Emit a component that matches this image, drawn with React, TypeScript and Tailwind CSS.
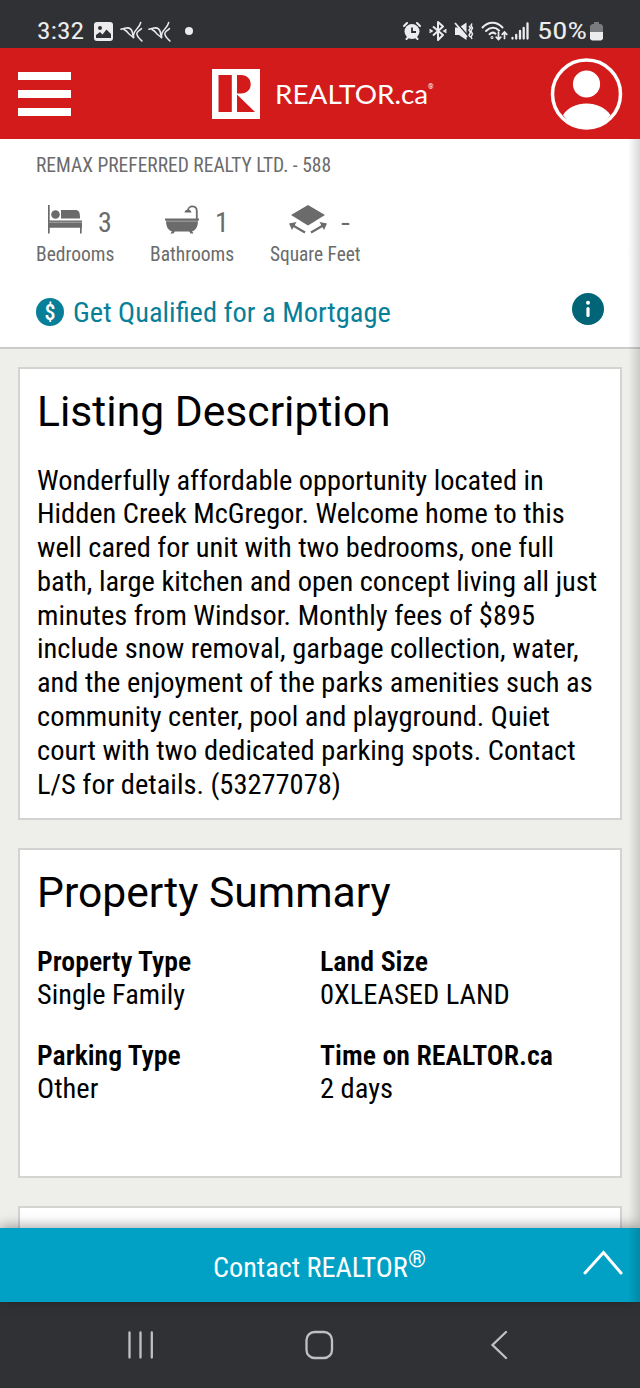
import { useLayoutEffect, useRef, useState } from 'react'
import type { ReactNode } from 'react'

interface FitProps {
  width: number
  className?: string
  children: ReactNode
}

// Single line of text, condensed horizontally to the given width
function Fit({ width, className = '', children }: FitProps) {
  const ref = useRef<HTMLSpanElement>(null)
  const [scale, setScale] = useState(1)

  useLayoutEffect(() => {
    if (ref.current) setScale(width / ref.current.offsetWidth)
  }, [width])

  return (
    <span className={`block ${className}`} style={{ width }}>
      <span
        ref={ref}
        className="inline-block origin-left whitespace-nowrap align-top"
        style={{ transform: `scaleX(${scale})` }}
      >
        {children}
      </span>
    </span>
  )
}

const description = [
  { text: 'Wonderfully affordable opportunity located in', width: 507 },
  { text: 'Hidden Creek McGregor. Welcome home to this', width: 528 },
  { text: 'well cared for unit with two bedrooms, one full', width: 517 },
  { text: 'bath, large kitchen and open concept living all just', width: 560 },
  { text: 'minutes from Windsor. Monthly fees of $895', width: 498 },
  { text: 'include snow removal, garbage collection, water,', width: 542 },
  { text: 'and the enjoyment of the parks amenities such as', width: 556 },
  { text: 'community center, pool and playground. Quiet', width: 513 },
  { text: 'court with two dedicated parking spots. Contact', width: 539 },
  { text: 'L/S for details. (53277078)', width: 303.5 },
]

const summary = [
  { label: 'Property Type', labelWidth: 154, value: 'Single Family', valueWidth: 148 },
  { label: 'Land Size', labelWidth: 108, value: '0XLEASED LAND', valueWidth: 190 },
  { label: 'Parking Type', labelWidth: 144, value: 'Other', valueWidth: 61 },
  { label: 'Time on REALTOR.ca', labelWidth: 233, value: '2 days', valueWidth: 73 },
]

function Bird() {
  return (
    <svg width="24" height="22" viewBox="0 0 24 22" fill="none" stroke="#ececee" strokeLinecap="round" strokeLinejoin="round">
      <path d="M1 8.300 6 7c3.500-.5 5.500 1 6.300 4l1.200 5.500" strokeWidth="1.600" />
      <path d="M4 8.500c2.500 1 3.500 2.500 5 4.500l4.500 3.500" strokeWidth="1.500" />
      <path d="M13.500 16.500C12.500 8.500 19 9 20.700 1.500" strokeWidth="1.500" />
      <path d="M21.500 7.500c-2 2.500-4.500 2.500-4.700 5 0 3 2.500 5 5.200 7.500" strokeWidth="1.500" />
    </svg>
  )
}

function StatusBar() {
  return (
    <div className="flex h-12 items-start bg-[#303135] pt-[19px] pl-[37px] text-[#ececee]">
      <Fit width={47} className="text-[24px] leading-6 font-normal font-stretch-normal">3:32</Fit>
      <svg className="mt-[3px] ml-[10px]" width="19" height="19" viewBox="0 0 19 19">
        <rect width="19" height="19" rx="3" fill="#ececee" />
        <circle cx="6" cy="6" r="2" fill="#303135" />
        <path d="M2 16v-3l4-3 2.500 2.500L12.500 7.500 17 12v4z" fill="#303135" />
      </svg>
      <div className="mt-[2px] ml-[7px] flex gap-1">
        <Bird />
        <Bird />
      </div>
      <div className="mt-2 ml-[13px] size-2 rounded-full bg-[#ececee]" />

      <svg className="mt-[3px] ml-[210px]" width="18" height="18" viewBox="0 0 18 18">
        <circle cx="9" cy="9.500" r="7.500" fill="#ececee" />
        <path d="m1 4 3-3M17 4l-3-3M3.500 17l2-2M14.500 17l-2-2" stroke="#ececee" strokeWidth="2" strokeLinecap="round" />
        <path d="M9 5.500V10h4" fill="none" stroke="#303135" strokeWidth="1.800" />
      </svg>
      <svg className="mt-[2px] ml-2" width="18" height="20" viewBox="0 0 18 20" fill="none" stroke="#ececee" strokeWidth="2">
        <path d="m4 5.500 10 8.500-5 5V1l5 4.500L4 14.500" strokeLinejoin="round" />
        <path d="M.5 8.500 3 10 .5 11.500M17.500 8.500 15 10l2.500 1.500" strokeWidth="1.500" />
      </svg>
      <svg className="mt-[3px] ml-[7px]" width="20" height="19" viewBox="0 0 20 19" fill="none">
        <path d="M1 5.500h4L12.500.5v17.500L5 13H1z" fill="#ececee" />
        <path d="m2 0 13 15" stroke="#303135" strokeWidth="1.500" />
        <path d="m1 1 12 14" stroke="#ececee" strokeWidth="1.800" />
        <path d="m15 4 1.500 2-1.500 2 1.500 2.500L15 13l1 2M18 1.500l-1 2 1.500 2.500-1.500 3 1.500 3-1.500 3 1 2" stroke="#ececee" strokeWidth="1.500" />
      </svg>
      <svg className="mt-[1px] ml-[7px]" width="28" height="21" viewBox="0 0 28 21" fill="none" stroke="#ececee" strokeWidth="2" strokeLinecap="round">
        <path d="M1.500 7.500C7 1 16 1 21.500 7.500M5 11c4-4.200 9.500-4.200 13-.5M8.500 14.200c2-1.800 4.300-2 6-.5" />
        <circle cx="11" cy="17.500" r=".5" />
        <path d="M17.500 12v7.500m-2.300-2.300 2.300 2.300 2.300-2.300M23.500 18.500V12m-2.300 2.300L23.500 12l2.300 2.300" strokeWidth="1.700" />
      </svg>
      <svg className="mt-[3px] ml-[2px]" width="18" height="18" viewBox="0 0 18 18" stroke="#ececee" strokeWidth="2.300" strokeLinecap="round">
        <path d="M1.500 16v.5M5.200 13v3.500M9 9v7.500M12.700 6v10.500M16.500 1.500v15" />
      </svg>
      <Fit width={50} className="ml-2 text-[24px] leading-6 font-normal font-stretch-normal">50%</Fit>
      <svg className="mt-[3px] ml-[3px]" width="13" height="19" viewBox="0 0 13 19">
        <path d="M4 0h5v2h2l2 2v6H0V4l2-2h2z" fill="#7a7b7e" />
        <path d="M0 10h13v7l-2 1.500H2L0 17z" fill="#ececee" />
      </svg>
    </div>
  )
}

function Header() {
  return (
    <header className="flex h-[91px] items-start bg-[#d31b1b] text-white">
      <div className="mt-6 ml-[18px] flex w-[53px] flex-col gap-[10px]">
        <div className="h-2 bg-white" />
        <div className="h-2 bg-white" />
        <div className="h-2 bg-white" />
      </div>
      <svg className="mt-[21px] ml-[141px]" width="48" height="50" viewBox="0 0 48 50">
        <path d="M0 0h48v50H0z" fill="#fff" />
        <path d="M6.500 6h13.300v37H6.500zM25 6h4c6 0 9.700 4 9.700 9.300S35 24.500 29 24.500h-4z" fill="#d31b1b" />
        <path d="m25 25.500 18 17.500H25z" fill="#d31b1b" />
      </svg>
      <Fit width={153} className="mt-[30px] ml-[15px] font-[Lato] text-[27.500px] leading-8">
        REALTOR.ca
      </Fit>
      <span className="mt-[35px] text-[7px] leading-[8px]">®</span>
      <svg className="mt-[9px] ml-auto mr-[17px]" width="73" height="73" viewBox="0 0 73 73">
        <circle cx="36.500" cy="37" r="34" fill="none" stroke="#fff" strokeWidth="3.500" />
        <circle cx="36.500" cy="27" r="13.600" fill="#fff" />
        <path d="M13 58c5-7.500 13.500-11.500 23.500-11.500S55 50.500 60.500 58c-6 8-14 13-24 13s-18-5-23.500-13z" fill="#fff" />
      </svg>
    </header>
  )
}

function BedIcon() {
  return (
    <svg width="34" height="29" viewBox="0 0 34 29" fill="#6b6b6b">
      <path d="M0 0h1.700v28.500H0zM0 15.500h34v7.300H0zM32 22h1.700v6.500H32z" />
      <path d="M1 17.300h33" stroke="#fff" strokeWidth=".4" />
      <circle cx="7.500" cy="9.500" r="4.300" />
      <path d="M13 5h14c4 0 5 2 5 8.500H13z" />
    </svg>
  )
}

function BathIcon() {
  return (
    <svg width="34" height="29" viewBox="0 0 34 29" fill="#6b6b6b">
      <path d="M0 13.500h34v2h-1c0 6-2 11-8 11H9c-6 0-8-5-8-11H0z" />
      <path d="M1 16.200h32" stroke="#fff" strokeWidth=".4" />
      <path d="M31.800 14V6c0-6-8.500-6-8.800-.5" fill="none" stroke="#6b6b6b" strokeWidth="1.800" />
      <path d="M19.500 7.500c.5-4 6.500-4 7 0zM7 26l-1.500 2.500h3L10 26zM27 26l1.500 2.500h-3L24 26z" />
    </svg>
  )
}

function AreaIcon() {
  return (
    <svg width="38" height="29" viewBox="0 0 38 29" fill="#6b6b6b">
      <path d="m19 0 17 10-17 10.500L2 10z" />
      <path d="m16 27.500-12-7M22 27.500l12-7" stroke="#6b6b6b" strokeWidth="2.200" />
      <path d="M0 18.500 7.500 17l-4.500 8zM38 18.500 30.500 17l4.500 8z" />
    </svg>
  )
}

const stats = [
  { icon: <BedIcon />, value: '3', valueWidth: 14, label: 'Bedrooms', labelWidth: 78, pad: 'pl-[12px] gap-[16px]', cell: 'w-[114px]' },
  { icon: <BathIcon />, value: '1', valueWidth: 14, label: 'Bathrooms', labelWidth: 84, pad: 'pl-[15px] gap-[16px]', cell: 'w-[120px]' },
  { icon: <AreaIcon />, value: '-', valueWidth: 9, label: 'Square Feet', labelWidth: 91, pad: 'pl-[19px] gap-[14px]', cell: 'w-[100px]' },
]

function ListingInfo() {
  return (
    <section className="h-[210px] border-b-2 border-[#cbcccb] bg-white px-9 pt-[14px] text-[#6b6b6b]">
      <Fit width={295} className="text-[19.500px] leading-[25px]">REMAX PREFERRED REALTY LTD. - 588</Fit>
      <div className="mt-[27px] flex">
        {stats.map((s) => (
          <div key={s.label} className={s.cell}>
            <div className={`flex h-[37px] items-start ${s.pad}`}>
              {s.icon}
              <Fit width={s.valueWidth} className="text-[28px] leading-[36px]">{s.value}</Fit>
            </div>
            <Fit width={s.labelWidth} className="text-[20px] leading-[25px]">{s.label}</Fit>
          </div>
        ))}
      </div>
      <div className="mt-[25px] flex items-start">
        <span className="mt-[6px] flex size-7 items-center justify-center rounded-full bg-[#077f98] text-[22px] font-medium text-white">
          $
        </span>
        <Fit width={317.5} className="ml-[9px] text-[28.500px] leading-[41px] text-[#077f98]">
          Get Qualified for a Mortgage
        </Fit>
        <svg className="mt-px ml-auto" width="32" height="32" viewBox="0 0 32 32">
          <circle cx="16" cy="16" r="16" fill="#016577" />
          <circle cx="16" cy="9.800" r="2" fill="#fff" />
          <path d="M16 15.500v7" stroke="#fff" strokeWidth="3.200" strokeLinecap="round" />
        </svg>
      </div>
    </section>
  )
}

export default function App() {
  return (
    <div className="relative flex h-[1388px] w-[640px] flex-col overflow-hidden bg-[#eeeeea] font-[Roboto_Condensed,Roboto,sans-serif] text-black font-stretch-condensed">
      <StatusBar />
      <Header />
      <ListingInfo />

      <main className="flex min-h-0 flex-1 flex-col gap-[28px] overflow-hidden px-[18px] pt-[18px]">
        <section className="h-[453px] shrink-0 border-2 border-[#d3d4d2] bg-white px-[17px] pt-[16px]">
          <h2 className="font-[Roboto] text-[43px] leading-[52px] font-stretch-normal">
            <Fit width={354}>Listing Description</Fit>
          </h2>
          <div className="mt-[26.500px] text-[28.500px] leading-[33.800px]">
            {description.map((line) => (
              <Fit key={line.text} width={line.width}>{line.text}</Fit>
            ))}
          </div>
        </section>

        <section className="h-[330px] shrink-0 border-2 border-[#d3d4d2] bg-white px-[17px] pt-[16px]">
          <h2 className="font-[Roboto] text-[43px] leading-[52px] font-stretch-normal">
            <Fit width={354}>Property Summary</Fit>
          </h2>
          <div className="mt-[26.500px] grid grid-cols-2 gap-y-[26.500px] text-[28.500px] leading-[33.800px]">
            {summary.map((item) => (
              <div key={item.label}>
                <Fit width={item.labelWidth} className="font-semibold">{item.label}</Fit>
                <Fit width={item.valueWidth}>{item.value}</Fit>
              </div>
            ))}
          </div>
        </section>

        <section className="h-[100px] shrink-0 border-2 border-[#d3d4d2] bg-white" />
      </main>

      <footer className="relative flex h-[74px] items-start bg-[#00a1c4] pl-[213px] text-white shadow-[0_-2px_12px_rgba(0,0,0,0.35)]">
        <Fit width={195} className="pt-[20px] text-[28.500px] leading-[40px]">Contact REALTOR</Fit>
        <Fit width={18} className="pt-[15px] text-[23px] leading-[34px]">®</Fit>
        <svg className="mt-[22px] mr-[17px] ml-auto" width="40" height="26" viewBox="0 0 40 26" fill="none" stroke="#fff" strokeWidth="3" strokeLinecap="round">
          <path d="M2 23 20.500 2.500l17.500 20.500" />
        </svg>
      </footer>

      <nav className="flex h-[86px] shrink-0 items-center bg-[#303135] pl-[126px]">
        <svg width="390" height="30" viewBox="0 0 390 30" fill="none" stroke="#bfc0c3" strokeWidth="2.300" strokeLinecap="round">
          <path d="M3.500 2.500v25M14.500 2.500v25M25.800 2.500v25M380 2 366.500 15 380 28" />
          <rect x="180.500" y="2" width="25.500" height="26" rx="8" />
        </svg>
      </nav>

      {/* soft shadow along the right edge of the page */}
      <div className="absolute top-[139px] right-0 h-[1163px] w-[12px] bg-linear-to-r from-transparent to-black/15" />
    </div>
  )
}
